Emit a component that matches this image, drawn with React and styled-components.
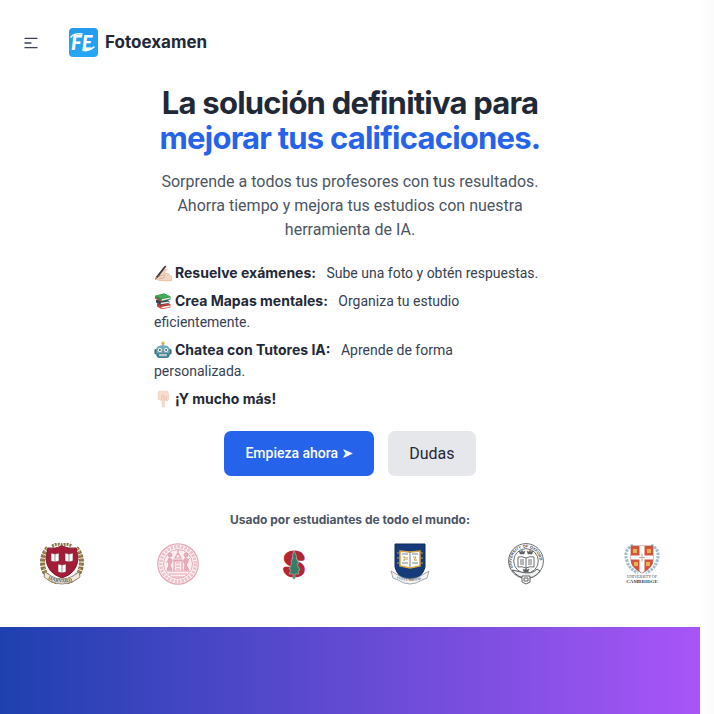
import React from "react";
import styled, { createGlobalStyle } from "styled-components";

const displayFont = 'Inter, "DejaVu Sans", sans-serif';

const GlobalStyle = createGlobalStyle`
  * { box-sizing: border-box; }
  body {
    margin: 0;
    background: #fff;
    color: #1f2937;
    font-family: Roboto, "DejaVu Sans", sans-serif;
    font-size: 14px;
    line-height: 21px;
  }
`;

const Page = styled.div`
  min-height: 100vh;
  display: grid;
  grid-template-columns: 1fr 14px;
`;

const Gutter = styled.div`
  background: linear-gradient(90deg, #ffffff, #fafafa);
`;

const Content = styled.div`
  min-width: 0;
  display: flex;
  flex-direction: column;
`;

const Header = styled.header`
  display: flex;
  align-items: center;
  gap: 28px;
  padding: 28px 21px 0;
`;

const MenuButton = styled.button`
  display: flex;
  padding: 0;
  border: 0;
  background: none;
  color: #374151;
  cursor: pointer;
`;

const Brand = styled.a`
  display: flex;
  align-items: center;
  gap: 7px;
  color: #1f2937;
  font-family: ${displayFont};
  font-size: 17px;
  font-weight: 700;
  line-height: 29px;
  text-decoration: none;
`;

const Hero = styled.main`
  display: flex;
  flex-direction: column;
  align-items: center;
  padding: 28px 0 42px;
`;

const Title = styled.h1`
  margin: 0;
  font-family: ${displayFont};
  font-size: 31px;
  font-weight: 700;
  line-height: 35px;
  letter-spacing: -0.025em;
  text-align: center;
`;

const Accent = styled.span`
  display: block;
  color: #2563eb;
`;

const Lead = styled.p`
  max-width: 392px;
  margin: 15px 0 21px;
  color: #4b5563;
  font-size: 16px;
  line-height: 24px;
  text-align: center;
`;

const Features = styled.ul`
  display: flex;
  flex-direction: column;
  gap: 7px;
  width: 100%;
  max-width: 392px;
  margin: 0;
  padding: 0;
  list-style: none;
`;

const Feature = styled.li`
  color: #374151;

  svg {
    margin-right: 3px;
    vertical-align: -4px;
  }
  strong {
    margin-right: 7px;
    color: #1f2937;
    font-family: ${displayFont};
    font-weight: 700;
    line-height: 14px;
  }
`;

const Actions = styled.div`
  display: flex;
  gap: 14px;
  margin-top: 21px;
`;

const Action = styled.button`
  padding: 12px 21px;
  border: 0;
  border-radius: 7px;
  background: ${(p) => (p.$primary ? "#2563eb" : "#e5e7eb")};
  color: ${(p) => (p.$primary ? "#fff" : "#1f2937")};
  font-family: inherit;
  font-size: ${(p) => (p.$primary ? "14px" : "16px")};
  font-weight: ${(p) => (p.$primary ? 500 : 400)};
  line-height: 21px;
  cursor: pointer;
`;

const Caption = styled.h2`
  margin: 35px 0 14px;
  color: #4b5563;
  font-family: ${displayFont};
  font-size: 12px;
  font-weight: 700;
  line-height: 18px;
`;

const Schools = styled.ul`
  display: grid;
  grid-template-columns: repeat(6, 1fr);
  justify-items: center;
  width: 100%;
  margin: 0;
  padding: 0 0 0 4px;
  list-style: none;
`;

const School = styled.li`
  display: flex;
`;

const Band = styled.section`
  flex: 1;
  min-height: 84px;
  background: linear-gradient(90deg, #1e40af, #a855f7);
`;

const MenuIcon = () => (
  <svg width="20" height="20" viewBox="0 0 20 20" fill="none" stroke="currentColor" strokeWidth="1.3" strokeLinecap="round" aria-hidden="true">
    <path d="M4 5.3h12M4 10h6M4 14.7h12" />
  </svg>
);

const BrandMark = () => (
  <svg width="29" height="29" viewBox="0 0 29 29" aria-hidden="true">
    <defs>
      <linearGradient id="mark" x1="0" y1="0" x2="0" y2="1">
        <stop offset="0" stopColor="#239aef" />
        <stop offset="1" stopColor="#27a6f6" />
      </linearGradient>
    </defs>
    <rect width="29" height="29" rx="4" fill="url(#mark)" />
    <text x="2" y="22" fill="#fff" fontFamily="Lato, sans-serif" fontSize="20" fontStyle="italic" fontWeight="900">FE</text>
    <path d="M2 9q3-4 11-3M14 22q5 2 11-3" fill="none" stroke="#fff" strokeWidth="1.6" strokeLinecap="round" />
  </svg>
);

const WritingHand = () => (
  <svg width="18" height="18" viewBox="0 0 18 18" role="img" aria-label="Mano escribiendo">
    <path d="M5 10.4 11.4 5.2q1.4-.7 1.7.4l-3 3.2 4.3 1.1 3.6 3v3.6l-5.5.4-6.4-.4-3.6-1.1q-1-1 .3-1.8l2-.4-1.5-.6q-.3-1.5 1.7-2.2z" fill="#f7d7c2" stroke="#d9a98c" strokeWidth=".6" />
    <path d="M5 12.5 8.3 11l2.5.4M5.1 14.7l3.7-.4 2.3-1.4" fill="none" stroke="#c9967c" strokeWidth=".7" />
    <path d="M1.3 15.8 2 12.7 10.3 2.2q1.3-.9 2 .3L4 13.6z" fill="#3d3b3c" />
    <path d="m2 12.7 2 .9-2.7 2.2z" fill="#c28a48" />
    <path d="m3.7 11.4 1.9 1.4" stroke="#b2aaa5" strokeWidth=".6" />
  </svg>
);

const Books = () => (
  <svg width="18" height="18" viewBox="0 0 18 18" role="img" aria-label="Libros">
    <path d="m3 11.7 8.6-1.4 4.8 2.4v2.8l-8.8 1.7L3 14.5z" fill="#d4473e" />
    <path d="m7.5 14.4 8.4-1.4v1.9l-8.4 1.5z" fill="#f5efe2" />
    <path d="m3 11.7 4.6 2.6 8.8-1.6" fill="none" stroke="#932d29" strokeWidth=".9" />
    <path d="m2 8 9-1.4 4.3 2.3v2.6L7 13 2 10.6z" fill="#394252" />
    <path d="m6.8 10.7 8-1.3v1.5l-8 1.4z" fill="#f2eee5" />
    <path d="M1.2 3.7 10 1.6l6.5 3v2.8L7.5 9.6 1.2 6.5z" fill="#2b8b49" />
    <path d="M1.2 3.7 10 1.6l6.5 3-9 2.2z" fill="#45aa58" />
    <path d="m7.7 7.3 8.1-1.9v1.4l-8.1 2z" fill="#f4f0e5" />
    <path d="m1 5.7 6.5 3.5" stroke="#c84338" strokeWidth="1.1" />
  </svg>
);

const Robot = () => (
  <svg width="18" height="18" viewBox="0 0 18 18" role="img" aria-label="Robot">
    <path d="M9 3v3" stroke="#66777c" />
    <circle cx="9" cy="2.2" r="1.6" fill="#e9a84b" />
    <rect x=".4" y="8" width="3.4" height="5.4" rx="1.4" fill="#496c7c" />
    <rect x="14.2" y="8" width="3.4" height="5.4" rx="1.4" fill="#496c7c" />
    <path d="M4 5.3q5-2 10 0l1.6 2v6.4q0 3.3-3.2 3.3H5.6q-3.2 0-3.2-3.3V7.3z" fill="#6dadb9" />
    <path d="M2.5 12.2h13v2.4q-.7 2.4-3.1 2.4H5.6q-2.4 0-3.1-2.4z" fill="#417f95" />
    <circle cx="5.9" cy="9" r="1.9" fill="#fff" />
    <circle cx="12.1" cy="9" r="1.9" fill="#fff" />
    <circle cx="5.9" cy="9" r="1" fill="#3e5964" />
    <circle cx="12.1" cy="9" r="1" fill="#3e5964" />
    <path d="m9 9.5 1.1 2H7.9z" fill="#d45c4c" />
    <rect x="5.3" y="13" width="7.4" height="2.2" rx=".6" fill="#dce8e7" />
    <path d="M7 13v2.2M9 13v2.2m2-2.2v2.2" stroke="#597e88" strokeWidth=".6" />
  </svg>
);

const PointDown = () => (
  <svg width="18" height="18" viewBox="0 0 18 18" role="img" aria-label="Dedo hacia abajo">
    <path d="M4.7 1.2h8.5l1.6 3.2-.3 5.4q-.3 1-1.3.8l-2.7-.3-.1 5.9q-.3 1.2-1.4 1-.9-.2-.9-1.4l-.2-5.3-2.4-.5q-1.4-.3-1.5-1.4l.2-3.6z" fill="#f8dccd" stroke="#e8c2ae" strokeWidth=".5" />
    <path d="m7.8 9.9.2-4.3 2-.5m.2 5-.1-4.3m2.2 4.4.2-4.1" fill="none" stroke="#deb19c" strokeWidth=".6" />
  </svg>
);

const Harvard = () => (
  <svg width="44" height="42" viewBox="0 0 44 42" role="img" aria-label="Harvard">
    <path d="M8 5Q1 13 3 24t14 15M36 5q7 8 5 19T27 39" fill="none" stroke="#8a7445" strokeWidth="5" strokeDasharray="3 1" />
    <path d="M7 5Q1 14 4 25t13 13M37 5q6 9 3 20T27 38" fill="none" stroke="#c9b17a" strokeWidth="1.6" strokeDasharray="1.5 2" />
    <path d="M12 3q5-3 10-1 5-2 10 1" fill="none" stroke="#8a7445" strokeWidth="3" strokeDasharray="2 1" />
    <path d="M8 5q8 1 14-2 6 3 14 2l2 11q-1 14-16 19Q7 30 6 16z" fill="#a51c38" stroke="#801b30" />
    <g fill="#fff" stroke="#74323e" strokeWidth=".6">
      <path d="m11 10 4 1 4-1v8l-4 1-4-1zM25 10l4 1 4-1v8l-4 1-4-1zM18 21l4 1 4-1v8l-4 1-4-1z" />
      <path d="M15 11v8m14-8v8m-7 3v8" />
    </g>
    <path d="m5 29 6 4q11 6 22 0l6-4 1 5-6 4q-12 6-24 0l-6-4z" fill="#f1eadb" stroke="#85735b" strokeWidth=".8" />
    <path id="harvardArc" d="M8 36q14 7 30 0" fill="none" />
    <text fill="#5e5045" fontFamily="Liberation Serif, serif" fontSize="5" fontWeight="700"><textPath href="#harvardArc">HARVARD</textPath></text>
  </svg>
);

const Mit = () => (
  <svg width="42" height="42" viewBox="0 0 42 42" role="img" aria-label="MIT" fill="none" stroke="#e3a3b3">
    <circle cx="21" cy="21" r="20.2" fill="#fffafb" strokeWidth="1.2" />
    <circle cx="21" cy="21" r="17.3" stroke="#edc3cd" strokeWidth="3.5" strokeDasharray="2.5 1" />
    <circle cx="21" cy="21" r="14.5" fill="#fdeef1" strokeWidth=".9" />
    <path d="M10 28h22M12 31h18M17 18h8v10h-8zM16 17h10M18 15h6l-3-5zM21 10V7" strokeWidth="1.2" />
    <path d="M12 15q4 1 3 4l-2 3 2 5h-5l2-5q-2-5 0-7zM28 15q4 0 3 4l-2 3 3 5h-5l1-5q-3-4 0-7z" fill="#e8afbd" />
    <circle cx="13" cy="12" r="2" fill="#e8afbd" />
    <circle cx="29" cy="12" r="2" fill="#e8afbd" />
    <path d="M19 20h4m-4 3h4m-4 3h4M15 34h12M9 20l2-2m19 0 3-3" />
  </svg>
);

const Stanford = () => (
  <svg width="42" height="42" viewBox="0 0 42 42" role="img" aria-label="Stanford">
    <text x="21" y="33" textAnchor="middle" fill="#b32635" stroke="#b32635" strokeWidth="3" strokeLinejoin="bevel" fontFamily="Roboto, sans-serif" fontSize="34" fontWeight="700">S</text>
    <path d="m21 8 3 6-1 1 3 5-2 1 3 6-2 1 1 3h-4v5h-2v-5h-4l2-4-2-1 3-6-1-1 2-5-1-1z" fill="#2f8069" stroke="#c9b5ab" strokeWidth=".6" />
  </svg>
);

const Yale = () => (
  <svg width="40" height="42" viewBox="0 0 40 42" role="img" aria-label="Yale">
    <path d="M5 1h30v23q-2 10-15 15Q7 34 5 24z" fill="#153b78" stroke="#102c5e" />
    <path d="m10 8 9 1 2 0 9-1v15l-10 2-10-2z" fill="#fff" stroke="#d7a43f" strokeWidth="1.5" />
    <path d="M20 9v15M12 11h6m4 0h6M12 20h6m4 0h6" stroke="#576270" strokeWidth=".8" />
    <path d="M13 14h2v3h-2m4-3v3m6-3h3l-2 3h3M7 10h3m20 0h3M7 15h3m20 0h3M7 20h3m20 0h3" fill="none" stroke="#c69a47" />
    <path d="m1 28 5 3q14 10 28 0l5-3-2 7-5 2q-12 8-24 0l-5-2z" fill="#f3f4f5" stroke="#8c9299" strokeWidth=".8" />
    <path id="yaleArc" d="M5 34q15 8 31 0" fill="none" />
    <text fill="#4c535c" fontFamily="Liberation Serif, serif" fontSize="3" fontWeight="700"><textPath href="#yaleArc" startOffset="2">LUX ET VERITAS</textPath></text>
  </svg>
);

const Oxford = () => (
  <svg width="38" height="42" viewBox="0 0 38 42" role="img" aria-label="Oxford" fill="none" stroke="#5d6062">
    <circle cx="19" cy="18" r="17.4" strokeWidth=".9" />
    <circle cx="19" cy="18" r="12.3" strokeWidth=".9" />
    <path id="oxfordArc" d="M8.2 28A14 14 0 1 1 29 28" stroke="none" />
    <text fill="#414446" stroke="none" fontFamily="Liberation Sans, sans-serif" fontSize="4" fontWeight="700"><textPath href="#oxfordArc" startOffset="4">UNIVERSITY OF OXFORD</textPath></text>
    <path d="M11 14q4-1 8 1 4-2 8-1v10q-4-1-8 1-4-2-8-1zM19 15v10M13 17h4m-4 2h4m-4 2h4m4-4h4m-4 2h4m-4 2h4" strokeWidth=".9" />
    <path d="m13 11-1-3 2 1 1-2 1 2 2-1-1 3zm8 0-1-3 2 1 1-2 1 2 2-1-1 3zm-4 18-1-3 2 1 1-2 1 2 2-1-1 3z" fill="#5d6062" strokeWidth=".5" />
    <path d="m5 27 9 2q11 3 16-3l3 2q-6 8-14 7-8 0-14-8z" fill="#f1f2f2" />
    <path d="M15 33h8v6l-4 2-4-2zM17 35h4v3h-4z" fill="#fff" />
  </svg>
);

const Cambridge = () => (
  <svg width="42" height="42" viewBox="0 0 42 42" role="img" aria-label="Cambridge">
    <path d="M12 2Q2 7 6 18q2 8 11 12M30 2q10 5 6 16-2 8-11 12" fill="none" stroke="#9fbdcf" strokeWidth="3" strokeDasharray="2.5 1" />
    <path d="M10 3h22v14q0 8-11 13-11-5-11-13z" fill="#d4533c" stroke="#9d5a44" strokeWidth=".7" />
    <path d="M18.5 3h5v25l-2.5 2-2.5-2zM10 12.5h22v4H10z" fill="#fff" />
    <path d="M12 6h4v4h-4zm14 0h4v4h-4zM13 19h4v4h-4zm12 0h4v4h-4z" fill="#ebb34d" />
    <path d="M18 14.5h6m-3-4v8" stroke="#c7a792" />
    <text x="21" y="35" textAnchor="middle" fill="#3e4854" fontFamily="Liberation Serif, serif" fontSize="4">UNIVERSITY OF</text>
    <text x="21" y="40" textAnchor="middle" fill="#3e4854" fontFamily="Liberation Serif, serif" fontSize="5" fontWeight="700">CAMBRIDGE</text>
  </svg>
);

const features = [
  { Icon: WritingHand, title: "Resuelve exámenes:", text: "Sube una foto y obtén respuestas." },
  { Icon: Books, title: "Crea Mapas mentales:", text: "Organiza tu estudio eficientemente." },
  { Icon: Robot, title: "Chatea con Tutores IA:", text: "Aprende de forma personalizada." },
  { Icon: PointDown, title: "¡Y mucho más!", text: "" },
];

const schools = [Harvard, Mit, Stanford, Yale, Oxford, Cambridge];

export default function App() {
  return (
    <Page>
      <GlobalStyle />
      <Content>
        <Header>
          <MenuButton type="button" aria-label="Abrir menú"><MenuIcon /></MenuButton>
          <Brand href="#"><BrandMark />Fotoexamen</Brand>
        </Header>
        <Hero>
          <Title>La solución definitiva para <Accent>mejorar tus calificaciones.</Accent></Title>
          <Lead>Sorprende a todos tus profesores con tus resultados. Ahorra tiempo y mejora tus estudios con nuestra herramienta de IA.</Lead>
          <Features>
            {features.map(({ Icon, title, text }) => (
              <Feature key={title}><Icon /><strong>{title}</strong> {text}</Feature>
            ))}
          </Features>
          <Actions>
            <Action type="button" $primary>Empieza ahora ➤</Action>
            <Action type="button">Dudas</Action>
          </Actions>
          <Caption>Usado por estudiantes de todo el mundo:</Caption>
          <Schools>
            {schools.map((Crest, i) => <School key={i}><Crest /></School>)}
          </Schools>
        </Hero>
        <Band />
      </Content>
      <Gutter />
    </Page>
  );
}
